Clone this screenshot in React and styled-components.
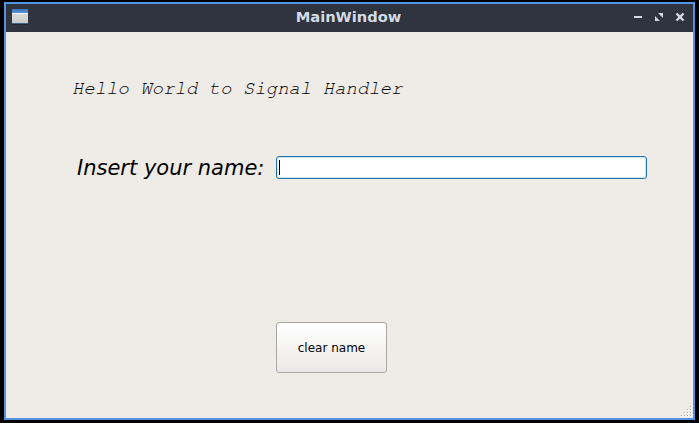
import React from "react";
import styled, { createGlobalStyle } from "styled-components";

const GlobalStyle = createGlobalStyle`
  *, *::before, *::after { box-sizing: border-box; }
  html, body { margin: 0; background: #000; }
`;

const Desktop = styled.div`
  width: 699px;
  height: 423px;
  padding: 2px 4px 3px;
  background: #000;
  overflow: hidden;
`;

const Window = styled.main`
  position: relative;
  height: 418px;
  border: 2px solid #5294e2;
  background: #efebe7;
  display: flex;
  flex-direction: column;
`;

const TitleBar = styled.header`
  height: 28px;
  flex: none;
  padding: 0 8px 0 6px;
  background: #2f343f;
  display: grid;
  grid-template-columns: 52px 1fr 52px;
  align-items: center;
`;

const Title = styled.h1`
  margin: 0 0 2px;
  font: bold 14.67px/18px "DejaVu Sans", sans-serif;
  color: #d3dae3;
  text-align: center;
  white-space: nowrap;
`;

const Controls = styled.div`
  display: flex;
  justify-content: space-between;
  margin-bottom: 2px;
`;

const ControlButton = styled.button`
  width: 10px;
  height: 10px;
  padding: 0;
  border: 0;
  background: none;
  color: #d3dae3;
  display: flex;
`;

const Content = styled.section`
  flex: 1;
  padding: 45px 46px 0 66px;
  display: flex;
  flex-direction: column;
  align-items: flex-start;
`;

const Greeting = styled.p`
  margin: 0;
  height: 24px;
  font: italic 19px/24px "Courier 10 Pitch", FreeMono, "Liberation Mono", monospace;
  color: #000;
  white-space: pre;
`;

const FormRow = styled.div`
  align-self: stretch;
  margin-top: 52px;
  display: grid;
  grid-template-columns: 204px 371px;
  align-items: center;
  height: 30px;
`;

const Label = styled.label`
  padding-left: 5px;
  font: italic 21px/30px "DejaVu Sans", sans-serif;
  color: #000;
  white-space: nowrap;
`;

const Field = styled.div`
  height: 23px;
  margin-bottom: 1px;
  padding: 3px 2px;
  border: 1px solid #2175ad;
  border-radius: 3px;
  background: #fff;
  box-shadow: inset 0 0 0 1px #d3e3ee;
`;

const Caret = styled.span`
  display: block;
  width: 1px;
  height: 15px;
  background: #000;
`;

const PushButton = styled.button`
  width: 111px;
  height: 51px;
  margin: 139px 0 0 204px;
  padding: 0;
  border: 1px solid #aaa7a4;
  border-radius: 3px;
  background: linear-gradient(#fff, #ebe9e7);
  font: 12px/16px "DejaVu Sans", sans-serif;
  color: #000;
`;

const SizeGrip = styled.svg`
  position: absolute;
  right: 0;
  bottom: 0;
`;

const WindowIcon = () => (
  <svg width="18" height="18" viewBox="0 0 18 18" shapeRendering="crispEdges">
    <defs>
      <linearGradient id="cap" x1="0" y1="0" x2="0" y2="1">
        <stop offset="0" stopColor="#3b70b5" />
        <stop offset="1" stopColor="#5c94d6" />
      </linearGradient>
      <linearGradient id="body" x1="0" y1="0" x2="0" y2="1">
        <stop offset="0" stopColor="#dcdcdb" />
        <stop offset="1" stopColor="#c9c9c8" />
      </linearGradient>
    </defs>
    <rect x="0" y="15" width="16" height="1" fill="#23272f" />
    <rect x="0" y="0" width="16" height="4" fill="url(#cap)" />
    <rect x="0" y="4" width="16" height="1" fill="#f4f5f6" />
    <rect x="0" y="5" width="16" height="9" fill="url(#body)" />
    <rect x="0" y="14" width="16" height="1" fill="#40608a" />
  </svg>
);

const gripDots = [[9, 0], [6, 3], [9, 3], [3, 6], [6, 6], [9, 6], [0, 9], [3, 9], [6, 9], [9, 9]];

export default function App() {
  return (
    <>
      <GlobalStyle />
      <Desktop>
        <Window>
          <TitleBar>
            <WindowIcon />
            <Title>MainWindow</Title>
            <Controls>
              <ControlButton aria-label="Minimize">
                <svg width="10" height="10" shapeRendering="crispEdges" fill="currentColor">
                  <path d="M1 4h8v2H1z" />
                </svg>
              </ControlButton>
              <ControlButton aria-label="Maximize">
                <svg width="10" height="10" fill="currentColor">
                  <path d="M4 1h5v5zM1 4v5h5z" />
                </svg>
              </ControlButton>
              <ControlButton aria-label="Close">
                <svg width="10" height="10" stroke="currentColor" strokeWidth="2.4">
                  <path d="M1.5 1.5l7 7M8.5 1.5l-7 7" />
                </svg>
              </ControlButton>
            </Controls>
          </TitleBar>
          <Content>
            <Greeting>Hello World to Signal Handler</Greeting>
            <FormRow>
              <Label>Insert your name:</Label>
              <Field role="textbox">
                <Caret />
              </Field>
            </FormRow>
            <PushButton>clear name</PushButton>
          </Content>
          <SizeGrip width="12" height="12" shapeRendering="crispEdges">
            {gripDots.map(([x, y]) => (
              <g key={`${x}-${y}`}>
                <rect x={x} y={y} width="2" height="2" fill="#fbfaf9" />
                <rect x={x} y={y} width="1" height="1" fill="#aaa7a3" />
              </g>
            ))}
          </SizeGrip>
        </Window>
      </Desktop>
    </>
  );
}
